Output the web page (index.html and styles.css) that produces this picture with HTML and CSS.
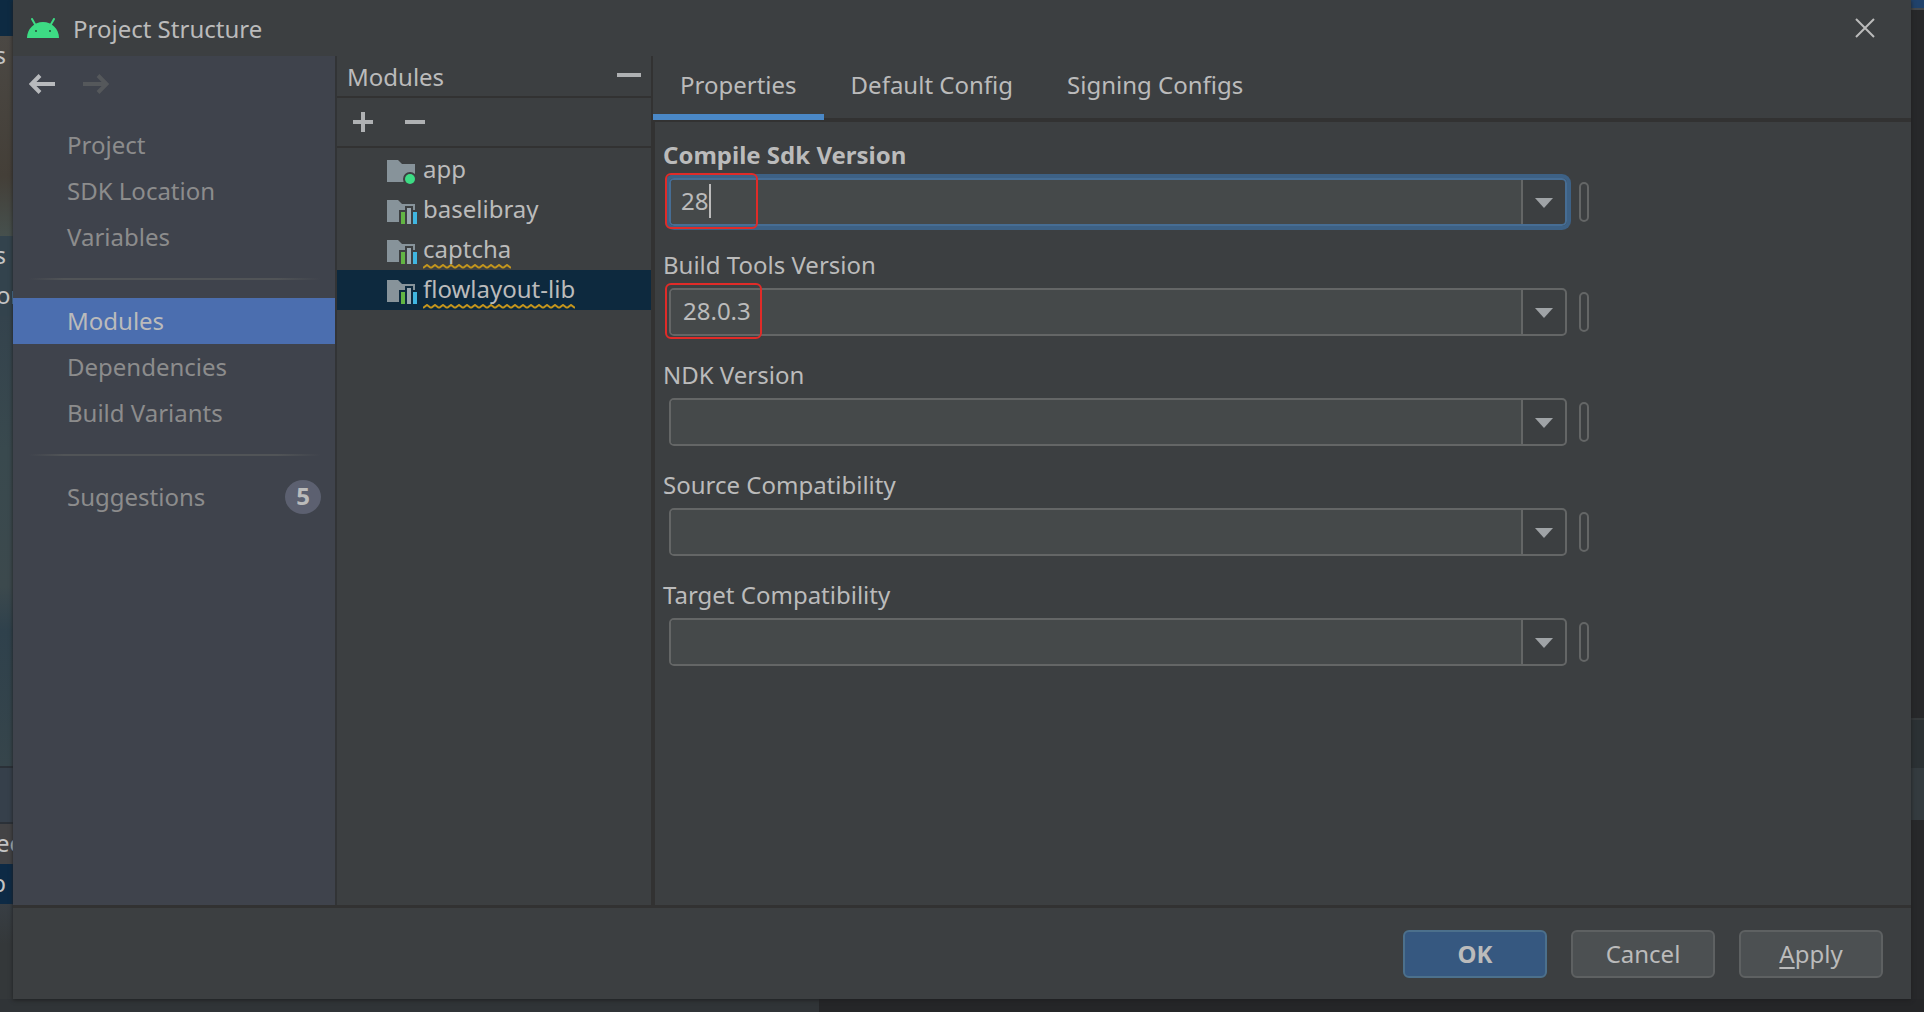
FILE: index.html
```html
<!DOCTYPE html>
<html lang="en">
<head>
<meta charset="utf-8">
<title>Project Structure</title>
<link rel="stylesheet" href="styles.css">
</head>
<body>
<svg class="defs" aria-hidden="true">
  <symbol id="folder" viewBox="0 0 31 26"><path fill="#87939a" d="M0 1h11l4 4h13v18H0z"/></symbol>
  <symbol id="app-module" viewBox="0 0 31 26"><use href="#folder" width="31" height="26"/><circle cx="23" cy="20" r="7" class="cutout"/><circle cx="23" cy="20" r="5" fill="#3ddc84"/></symbol>
  <symbol id="lib-module" viewBox="0 0 31 26"><use href="#folder" width="31" height="26"/><path class="cutout" d="M12 11h6V7h8v4h5v15H12z"/><path fill="#62b543" d="M14 13h4v12h-4z"/><path fill="#9aa7b0" d="M20 9h4v16h-4z"/><path fill="#40b6e0" d="M26 13h4v12h-4z"/></symbol>
</svg>
<div class="desktop">
  <div class="behind-left" aria-hidden="true">
    <div class="strip navy"></div>
    <div class="strip photo"><span class="bit">s</span></div>
    <div class="strip slate"><span class="bit">s</span><span class="bit start">on</span></div>
    <div class="strip lake"></div>
    <div class="strip dusk"></div>
    <div class="strip row-a"><span class="bit start">ec</span></div>
    <div class="strip row-b"><span class="bit">p</span></div>
    <div class="strip rest"></div>
  </div>

  <main class="dialog">
    <header class="titlebar">
      <svg class="droid" viewBox="0 0 32 20" aria-hidden="true"><path fill="#3ddc84" d="M0 20C0 11 7 4 16 4s16 7 16 16z"/><path stroke="#3ddc84" stroke-width="2" stroke-linecap="round" d="M5 1l4 7M27 1l-4 7"/><circle cx="9" cy="13" r="1" fill="#24503a"/><circle cx="23" cy="13" r="1" fill="#24503a"/></svg>
      <h1>Project Structure</h1>
      <button class="icon-btn close" aria-label="Close"><svg width="20" height="20" viewBox="0 0 20 20"><path stroke="#bbb" stroke-width="2" d="M1 1l18 18M19 1L1 19"/></svg></button>
    </header>

    <div class="body">
      <nav class="sidebar">
        <div class="history">
          <button class="icon-btn" aria-label="Back"><svg width="26" height="20" viewBox="0 0 26 20"><path fill="none" stroke="#b8babd" stroke-width="4" d="M26 10H3M11 1.500L2.500 10l8.500 8.500"/></svg></button>
          <button class="icon-btn" aria-label="Forward" disabled><svg width="26" height="20" viewBox="0 0 26 20"><path fill="none" stroke="#55585b" stroke-width="4" d="M0 10h23M15 1.500l8.500 8.500-8.500 8.500"/></svg></button>
        </div>
        <a class="nav" href="#project">Project</a>
        <a class="nav" href="#sdk">SDK Location</a>
        <a class="nav" href="#variables">Variables</a>
        <hr>
        <a class="nav current" href="#modules">Modules</a>
        <a class="nav" href="#dependencies">Dependencies</a>
        <a class="nav" href="#variants">Build Variants</a>
        <hr>
        <a class="nav" href="#suggestions">Suggestions <span class="badge">5</span></a>
      </nav>

      <section class="modules">
        <div class="modules-head"><h2>Modules</h2><button class="icon-btn" aria-label="Hide"><svg width="24" height="20"><path fill="#afb1b3" d="M0 7h24v4H0z"/></svg></button></div>
        <div class="toolbar">
          <button class="icon-btn" aria-label="Add module"><svg width="20" height="20"><path fill="#afb1b3" d="M8 0h4v8h8v4h-8v8H8v-8H0V8h8z"/></svg></button>
          <button class="icon-btn" aria-label="Remove module"><svg width="20" height="20"><path fill="#afb1b3" d="M0 8h20v4H0z"/></svg></button>
        </div>
        <ul class="tree">
          <li><svg class="mod"><use href="#app-module"/></svg><span>app</span></li>
          <li><svg class="mod"><use href="#lib-module"/></svg><span>baselibray</span></li>
          <li><svg class="mod"><use href="#lib-module"/></svg><span class="warn">captcha</span></li>
          <li class="selected"><svg class="mod"><use href="#lib-module"/></svg><span class="warn">flowlayout-lib</span></li>
        </ul>
      </section>

      <section class="detail">
        <div class="tabs" role="tablist">
          <button class="tab active" role="tab" aria-selected="true">Properties</button>
          <button class="tab" role="tab" aria-selected="false">Default Config</button>
          <button class="tab" role="tab" aria-selected="false">Signing Configs</button>
        </div>
        <form class="form">
          <div class="field">
            <label class="strong" for="compile">Compile Sdk Version</label>
            <div class="line">
              <div class="combo focused"><input id="compile" value="28"><button type="button" class="drop" aria-label="Show versions"><svg width="18" height="10"><path fill="#9fa3a6" d="M0 0h18l-9 10z"/></svg></button></div>
              <button type="button" class="bind" aria-label="Bind variable"></button>
              <i class="caret"></i><i class="mark mark-a"></i>
            </div>
          </div>
          <div class="field">
            <label for="tools">Build Tools Version</label>
            <div class="line">
              <div class="combo"><input id="tools" value="28.0.3"><button type="button" class="drop" aria-label="Show versions"><svg width="18" height="10"><path fill="#9fa3a6" d="M0 0h18l-9 10z"/></svg></button></div>
              <button type="button" class="bind" aria-label="Bind variable"></button>
              <i class="mark mark-b"></i>
            </div>
          </div>
          <div class="field">
            <label for="ndk">NDK Version</label>
            <div class="line">
              <div class="combo"><input id="ndk"><button type="button" class="drop" aria-label="Show versions"><svg width="18" height="10"><path fill="#9fa3a6" d="M0 0h18l-9 10z"/></svg></button></div>
              <button type="button" class="bind" aria-label="Bind variable"></button>
            </div>
          </div>
          <div class="field">
            <label for="source">Source Compatibility</label>
            <div class="line">
              <div class="combo"><input id="source"><button type="button" class="drop" aria-label="Show versions"><svg width="18" height="10"><path fill="#9fa3a6" d="M0 0h18l-9 10z"/></svg></button></div>
              <button type="button" class="bind" aria-label="Bind variable"></button>
            </div>
          </div>
          <div class="field">
            <label for="target">Target Compatibility</label>
            <div class="line">
              <div class="combo"><input id="target"><button type="button" class="drop" aria-label="Show versions"><svg width="18" height="10"><path fill="#9fa3a6" d="M0 0h18l-9 10z"/></svg></button></div>
              <button type="button" class="bind" aria-label="Bind variable"></button>
            </div>
          </div>
        </form>
      </section>
    </div>

    <footer class="actions">
      <button class="btn primary">OK</button>
      <button class="btn">Cancel</button>
      <button class="btn"><u>A</u>pply</button>
    </footer>
  </main>

  <div class="behind-right" aria-hidden="true">
    <div class="strip sky"></div>
    <div class="strip dark"></div>
    <div class="strip teal"></div>
    <div class="strip teal-light"></div>
    <div class="strip dark-low"></div>
  </div>
  <div class="behind-bottom" aria-hidden="true"></div>
</div>
</body>
</html>
```
FILE: styles.css
```css
* { box-sizing: border-box; }
body {
  margin: 0;
  background: #27282a;
  color: #bbb;
  font: 24px/32px "Noto Sans", "Open Sans", sans-serif;
}
button, input { font: inherit; color: inherit; }
h1, h2 { margin: 0; padding-top: 2px; font: inherit; }
.defs { position: absolute; width: 0; height: 0; }

.desktop {
  display: grid;
  grid-template: 1fr 13px / 13px 1fr 13px;
  min-height: 100vh;
}

/* slices of the editor window that show round the dialog */
.behind-left, .behind-right {
  display: flex;
  flex-direction: column;
  overflow: hidden;
}
.strip {
  display: flex;
  flex-direction: column;
  align-items: flex-end;
  gap: 8px;
  padding: 3px 7px 0 0;
  overflow: hidden;
}
.bit { flex: none; color: #c4c4c4; }
.start { align-self: flex-start; margin-left: -4px; }
.navy { height: 36px; background: #0d2a42; }
.photo { height: 200px; background: linear-gradient(#4b4844, #443f38 70%, #46504d); }
.slate { height: 80px; background: #33434d; }
.lake { height: 450px; background: linear-gradient(#34434d, #39494e 30%, #3c494d 60%, #2f414c 70%, #36454b); }
.dusk { height: 58px; background: #36404b; border-top: 2px solid #2b3138; border-bottom: 2px solid #2b3138; }
.row-a { height: 40px; background: #434345; }
.row-b { height: 40px; background: #0d2a45; }
.rest { flex: 1; background: linear-gradient(#383e44, #34383a 40px); }
.sky { height: 10px; background: #20426b; border-bottom: 2px solid #45494c; }
.dark { flex: 4; background: #27282a; }
.dark-low { flex: 1; background: #27282a; }
.teal { height: 50px; background: #2b3134; border-top: 2px solid #35393b; }
.teal-light { height: 52px; background: #343b3f; }
.behind-bottom {
  grid-column: 1 / -1;
  background: linear-gradient(90deg, #303437 819px, #252628 819px);
}

.dialog {
  position: relative;
  display: flex;
  flex-direction: column;
  min-width: 0;
  background: #3c3f41;
  box-shadow: 0 1px 4px #1e1f20;
}
.titlebar {
  display: flex;
  align-items: center;
  height: 56px;
  padding: 0 36px 0 14px;
}
.droid { width: 32px; height: 20px; margin-right: 14px; }
.close { margin-left: auto; }
.icon-btn {
  display: flex;
  padding: 0;
  border: 0;
  background: none;
}

.body { display: flex; flex: 1; }
.sidebar {
  width: 324px;
  background: #3f434c;
  border-right: 2px solid #323436;
}
.history {
  display: flex;
  gap: 28px;
  height: 66px;
  padding: 18px 16px;
}
.nav {
  display: flex;
  align-items: center;
  justify-content: space-between;
  height: 46px;
  padding: 0 14px 0 54px;
  color: #8c8c8c;
  text-decoration: none;
}
.current { background: #4b6eaf; color: #bbb; }
.sidebar hr {
  height: 2px;
  margin: 18px 14px 18px 16px;
  border: 0;
  background: linear-gradient(90deg, transparent, #515457 12%, #515457 85%, transparent);
}
.badge {
  width: 36px;
  height: 34px;
  border-radius: 50%;
  background: #5c6070;
  color: #bbb;
  font-weight: 700;
  text-align: center;
}

.modules { width: 314px; }
.modules-head {
  display: flex;
  align-items: center;
  justify-content: space-between;
  height: 42px;
  padding: 0 10px;
  border-bottom: 2px solid #323232;
}
.toolbar {
  display: flex;
  align-items: center;
  gap: 32px;
  height: 50px;
  padding: 0 16px;
  border-bottom: 2px solid #323232;
}
.tree { margin: 0; padding: 2px 0; list-style: none; }
.tree li {
  --row: #3c3f41;
  display: flex;
  align-items: center;
  gap: 5px;
  height: 40px;
  padding: 0 0 2px 50px;
  background: var(--row);
}
.mod { width: 31px; height: 26px; margin-top: 6px; }
.cutout { fill: var(--row); }
.tree .selected { --row: #0d293e; }
.warn {
  padding-bottom: 4px;
  margin-bottom: -4px;
  background: url("data:image/svg+xml,%3Csvg xmlns='http://www.w3.org/2000/svg' width='8' height='5'%3E%3Cpath d='M0 4L4 1l4 3' fill='none' stroke='%23c4951c' stroke-width='2'/%3E%3C/svg%3E") repeat-x left bottom;
}

.detail {
  flex: 1;
  min-width: 0;
  border-left: 4px solid #323232;
}
.tabs {
  display: flex;
  height: 66px;
  margin-left: -2px;
  background: #3c3f41;
  border-bottom: 4px solid #323232;
}
.tab {
  height: 64px;
  padding: 0 27px;
  border: 0;
  border-bottom: 6px solid transparent;
  background: none;
}
.active { border-bottom-color: #4a88c7; }
.form {
  display: flex;
  flex-direction: column;
  gap: 23px;
  width: 75%;
  padding: 17px 8px 0 8px;
}
.field { display: flex; flex-direction: column; gap: 7px; }
.strong { font-weight: 700; }
.line {
  position: relative;
  display: flex;
  align-items: center;
  gap: 12px;
  padding-left: 6px;
}
.combo {
  display: flex;
  flex: 1;
  height: 48px;
  border: 2px solid #646666;
  border-radius: 5px;
}
.focused { border-color: #466d94; box-shadow: 0 0 0 4px #3d6185; }
.combo input {
  flex: 1;
  min-width: 0;
  padding: 0 12px 2px;
  border: 0;
  border-radius: 3px 0 0 3px;
  background: #45494a;
  outline: 0;
}
.focused input { padding: 0 10px 2px; }
.drop {
  display: flex;
  align-items: center;
  justify-content: center;
  width: 44px;
  padding: 2px 0 0;
  border: 0;
  border-left: 2px solid #646666;
  background: none;
}
.bind {
  width: 10px;
  height: 40px;
  padding: 0;
  border: 2px solid #646666;
  border-radius: 5px;
  background: none;
}
.caret {
  position: absolute;
  left: 46px;
  top: 6px;
  width: 2px;
  height: 34px;
  background: #bbb;
}
.mark {
  position: absolute;
  top: -5px;
  left: 2px;
  height: 56px;
  border: 2px solid #e02b28;
  border-radius: 6px;
}
.mark-a { width: 93px; }
.mark-b { width: 97px; }

.actions {
  display: flex;
  justify-content: flex-end;
  gap: 24px;
  height: 94px;
  padding: 22px 28px 0;
  border-top: 3px solid #323232;
}
.btn {
  width: 144px;
  height: 48px;
  border: 2px solid #5e6162;
  border-radius: 6px;
  background: #4c5052;
}
.btn u { text-decoration-thickness: 2px; text-underline-offset: 4px; }
.primary { border-color: #4c708c; background: #365880; font-weight: 700; }
```
